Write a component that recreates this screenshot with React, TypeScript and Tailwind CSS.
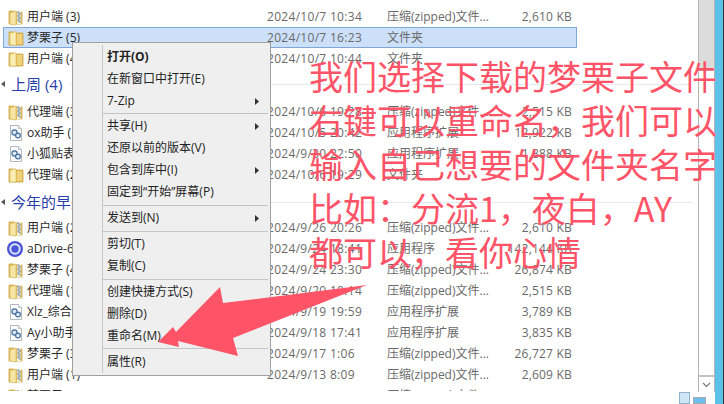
import React from "react";

const FONT = "font-['Open_Sans','Noto_Sans_CJK_SC',sans-serif]";

function ZipIcon() {
  return (
    <svg width="16" height="18" viewBox="0 0 16 18" className="shrink-0">
      <path d="M1 3h5l1 1h7v12H1z" fill="#e8c25c" stroke="#c9a441" strokeWidth="0.8" />
      <path d="M2 5l6-2v14l-6-1z" fill="#f7e6a3" stroke="#d2b35a" strokeWidth="0.6" />
      <rect x="9" y="3" width="4" height="13" fill="#fbf3d0" />
      <path d="M10 3v2h2v2h-2v2h2v2h-2v2h2v2" fill="none" stroke="#7c8fa8" strokeWidth="1.1" />
    </svg>
  );
}

function FolderIcon() {
  return (
    <svg width="16" height="18" viewBox="0 0 16 18" className="shrink-0">
      <path d="M1 3h5l1 1h8v12H1z" fill="#e6bd55" stroke="#c9a441" strokeWidth="0.8" />
      <path d="M2 4.5l6-2v14l-6-1z" fill="#fbeeb4" stroke="#d6b860" strokeWidth="0.6" />
      <path d="M9 5h5v10H9z" fill="#f1d27c" />
    </svg>
  );
}

function DllIcon() {
  return (
    <svg width="16" height="18" viewBox="0 0 16 18" className="shrink-0">
      <path d="M2.5 1.5h8l3 3v12h-11z" fill="#fcfcfc" stroke="#a9b0b8" strokeWidth="0.9" />
      <path d="M10.5 1.5v3h3" fill="#e8ebee" stroke="#a9b0b8" strokeWidth="0.7" />
      <circle cx="6.5" cy="8.5" r="2.6" fill="#dce7f3" stroke="#3e6a9c" strokeWidth="1.1" />
      <circle cx="10" cy="11.5" r="2.4" fill="#dce7f3" stroke="#3e6a9c" strokeWidth="1.1" />
    </svg>
  );
}

function DriveIcon() {
  return (
    <svg width="16" height="18" viewBox="0 0 16 18" className="-ml-[1px] mr-[1px] shrink-0">
      <circle cx="8" cy="9" r="8" fill="#4a55d8" />
      <circle cx="8" cy="9" r="4.7" fill="none" stroke="#dfe3fb" strokeWidth="2" />
    </svg>
  );
}

const ICONS = { zip: ZipIcon, folder: FolderIcon, dll: DllIcon, drive: DriveIcon };
type IconName = keyof typeof ICONS;
type RowData = { icon: IconName; name: string; date: string; type: string; size?: string; selected?: boolean };

const ZIP = "压缩(zipped)文件...";
const EXT = "应用程序扩展";
const DIR = "文件夹";

function Row({ icon, name, date, type, size, selected }: RowData) {
  const Icon = ICONS[icon];
  return (
    <div
      className={
        "flex h-[21px] w-[574px] shrink-0 items-center border " +
        (selected ? "border-[#7fa6d6] bg-[#cce0fa]" : "border-transparent")
      }
    >
      <div className="flex w-[263px] shrink-0 items-center gap-[3px] pl-[4px] text-[#2a2a2a]">
        <Icon />
        <span className="whitespace-nowrap">{name}</span>
      </div>
      <span className="w-[120px] shrink-0 whitespace-nowrap tracking-[0.3px]">{date}</span>
      <span className="w-[105px] shrink-0 whitespace-nowrap">{type}</span>
      <span className="w-[80px] shrink-0 whitespace-nowrap text-right tracking-[0.2px]">{size}</span>
    </div>
  );
}

function Group({ title, className }: { title: string; className: string }) {
  return (
    <div className={"flex shrink-0 items-center " + className}>
      <svg width="4" height="6" viewBox="0 0 4 6" className="mr-[6px] shrink-0">
        <path d="M0 3l4-3v6z" fill="#555" />
      </svg>
      <span className="whitespace-nowrap text-[15px] leading-none text-[#2a3fae]">{title}</span>
      <div className="ml-[8px] h-px w-full bg-[#e3e9f1]" />
    </div>
  );
}

function MenuItem({
  label,
  bold,
  arrow,
}: {
  label: string;
  bold?: boolean;
  arrow?: boolean;
}) {
  return (
    <div className="flex h-[22px] items-center pl-[34px] pr-[11px] text-[#222]">
      <span className={"grow whitespace-nowrap " + (bold ? "font-bold" : "")}>{label}</span>
      {arrow && (
        <svg width="4" height="7" viewBox="0 0 4 7">
          <path d="M0 0l4 3.5L0 7z" fill="#333" />
        </svg>
      )}
    </div>
  );
}

function MenuSep({ className = "my-[1px]" }: { className?: string }) {
  return <div className={"ml-[30px] mr-[2px] h-px bg-[#c4c4c4] " + className} />;
}

export default function App() {
  return (
    <div className={"relative h-[404px] w-[724px] overflow-hidden bg-white text-[12px] text-[#6a6a6a] " + FONT}>
      <div className="flex h-[391px] flex-col overflow-hidden pl-[3px] pt-[6px]">
        <Row icon="zip" name="用户端 (3)" date="2024/10/7 10:34" type={ZIP} size="2,610 KB" />
        <Row icon="folder" name="梦栗子 (5)" date="2024/10/7 16:23" type={DIR} selected />
        <Row icon="folder" name="用户端 (4)" date="2024/10/7 10:44" type={DIR} />
        <Group title="上周 (4)" className="mb-[6px] -ml-[3px] mt-[4px] h-[22px] w-[692px] pl-[1px]" />
        <Row icon="zip" name="代理端 (3)" date="2024/10/6 19:28" type={ZIP} size="2,515 KB" />
        <Row icon="dll" name="ox助手 (1)" date="2024/10/5 20:42" type={EXT} size="12,922 KB" />
        <Row icon="dll" name="小狐贴表 (1)" date="2024/9/30 22:50" type={EXT} size="1,888 KB" />
        <Row icon="folder" name="代理端 (2)" date="2024/10/6 19:29" type={DIR} />
        <Group title="今年的早些时候" className="mb-[4px] -ml-[3px] mt-[6px] h-[22px] w-[692px] pl-[1px]" />
        <Row icon="zip" name="用户端 (2)" date="2024/9/26 20:26" type={ZIP} size="2,610 KB" />
        <Row icon="drive" name="aDrive-6.0.exe" date="2024/9/24 18:41" type="应用程序" size="142,144 KB" />
        <Row icon="zip" name="梦栗子 (4)" date="2024/9/24 23:30" type={ZIP} size="26,874 KB" />
        <Row icon="zip" name="代理端 (1)" date="2024/9/20 10:14" type={ZIP} size="2,515 KB" />
        <Row icon="dll" name="Xlz_综合助手" date="2024/9/19 19:59" type={EXT} size="3,789 KB" />
        <Row icon="dll" name="Ay小助手" date="2024/9/18 17:41" type={EXT} size="3,835 KB" />
        <Row icon="zip" name="梦栗子 (3)" date="2024/9/17 1:06" type={ZIP} size="26,727 KB" />
        <Row icon="zip" name="用户端 (1)" date="2024/9/13 8:09" type={ZIP} size="2,609 KB" />
        <Row icon="zip" name="梦栗子 (2)" date="2024/9/10 9:02" type={ZIP} size="27,731 KB" />
      </div>

      <div className="absolute right-0 top-0 flex h-full">
        <div className="flex h-[392px] w-[17px] flex-col border-x border-[#b4b4b4] bg-white">
          <div className="h-[71px] border-b border-[#b4b4b4] bg-[#dcdcdc]" />
          <div className="grow" />
          <div className="flex h-[17px] items-center justify-center border-t-2 border-[#c4c4c4]">
            <svg width="9" height="6" viewBox="0 0 9 6">
              <path d="M1 1l3.5 3.5L8 1" fill="none" stroke="#777" strokeWidth="1.2" />
            </svg>
          </div>
        </div>
        <div className="w-[8px] bg-[#5cc2ea]" />
        <div className="w-px bg-[#2d2f38]" />
      </div>

      <div className="absolute left-[72px] top-[42px] h-[334px] w-[199px] border border-[#a0a0a0] bg-[#efefef] pb-[2px] pt-[3px]">
        <div className="absolute bottom-[2px] left-[29px] top-[2px] w-px bg-[#c8c8c8]" />
        <MenuItem label="打开(O)" bold />
        <MenuItem label="在新窗口中打开(E)" />
        <MenuItem label="7-Zip" arrow />
        <MenuSep />
        <MenuItem label="共享(H)" arrow />
        <MenuItem label="还原以前的版本(V)" />
        <MenuItem label="包含到库中(I)" arrow />
        <MenuItem label="固定到“开始”屏幕(P)" />
        <MenuSep className="mb-[1px] mt-[2px]" />
        <MenuItem label="发送到(N)" arrow />
        <MenuSep className="mb-[1px] mt-[2px]" />
        <MenuItem label="剪切(T)" />
        <MenuItem label="复制(C)" />
        <MenuSep className="mb-[1px] mt-[2px]" />
        <MenuItem label="创建快捷方式(S)" />
        <MenuItem label="删除(D)" />
        <MenuItem label="重命名(M)" />
        <MenuSep className="mb-[2px] mt-[1px]" />
        <MenuItem label="属性(R)" />
      </div>

      <svg width="724" height="404" viewBox="0 0 724 404" className="absolute left-0 top-0">
        <path
          d="M158 342L173 327L176 332L220 287L223 303L367 285L233 338L238 356L178 341L179 347Z"
          fill="#ff5468"
        />
      </svg>

      <div className="absolute left-[309px] top-[54px] whitespace-nowrap font-['Noto_Sans_CJK_SC',sans-serif] text-[34px] font-normal leading-[44px] text-[#ff5468]">
        <div>我们选择下载的梦栗子文件</div>
        <div>右键可以重命名，我们可以</div>
        <div>输入自己想要的文件夹名字</div>
        <div>比如：分流1，夜白，AY</div>
        <div>都可以，看你心情</div>
      </div>

      <div className="absolute bottom-0 right-[34px] h-[12px] w-[11px] border border-[#8fb0c8] bg-[#cfe6f7]" />
      <div className="absolute bottom-0 right-[18px] h-[7px] w-[13px] border border-[#aaa] bg-[#6cc0ee]" />
    </div>
  );
}
